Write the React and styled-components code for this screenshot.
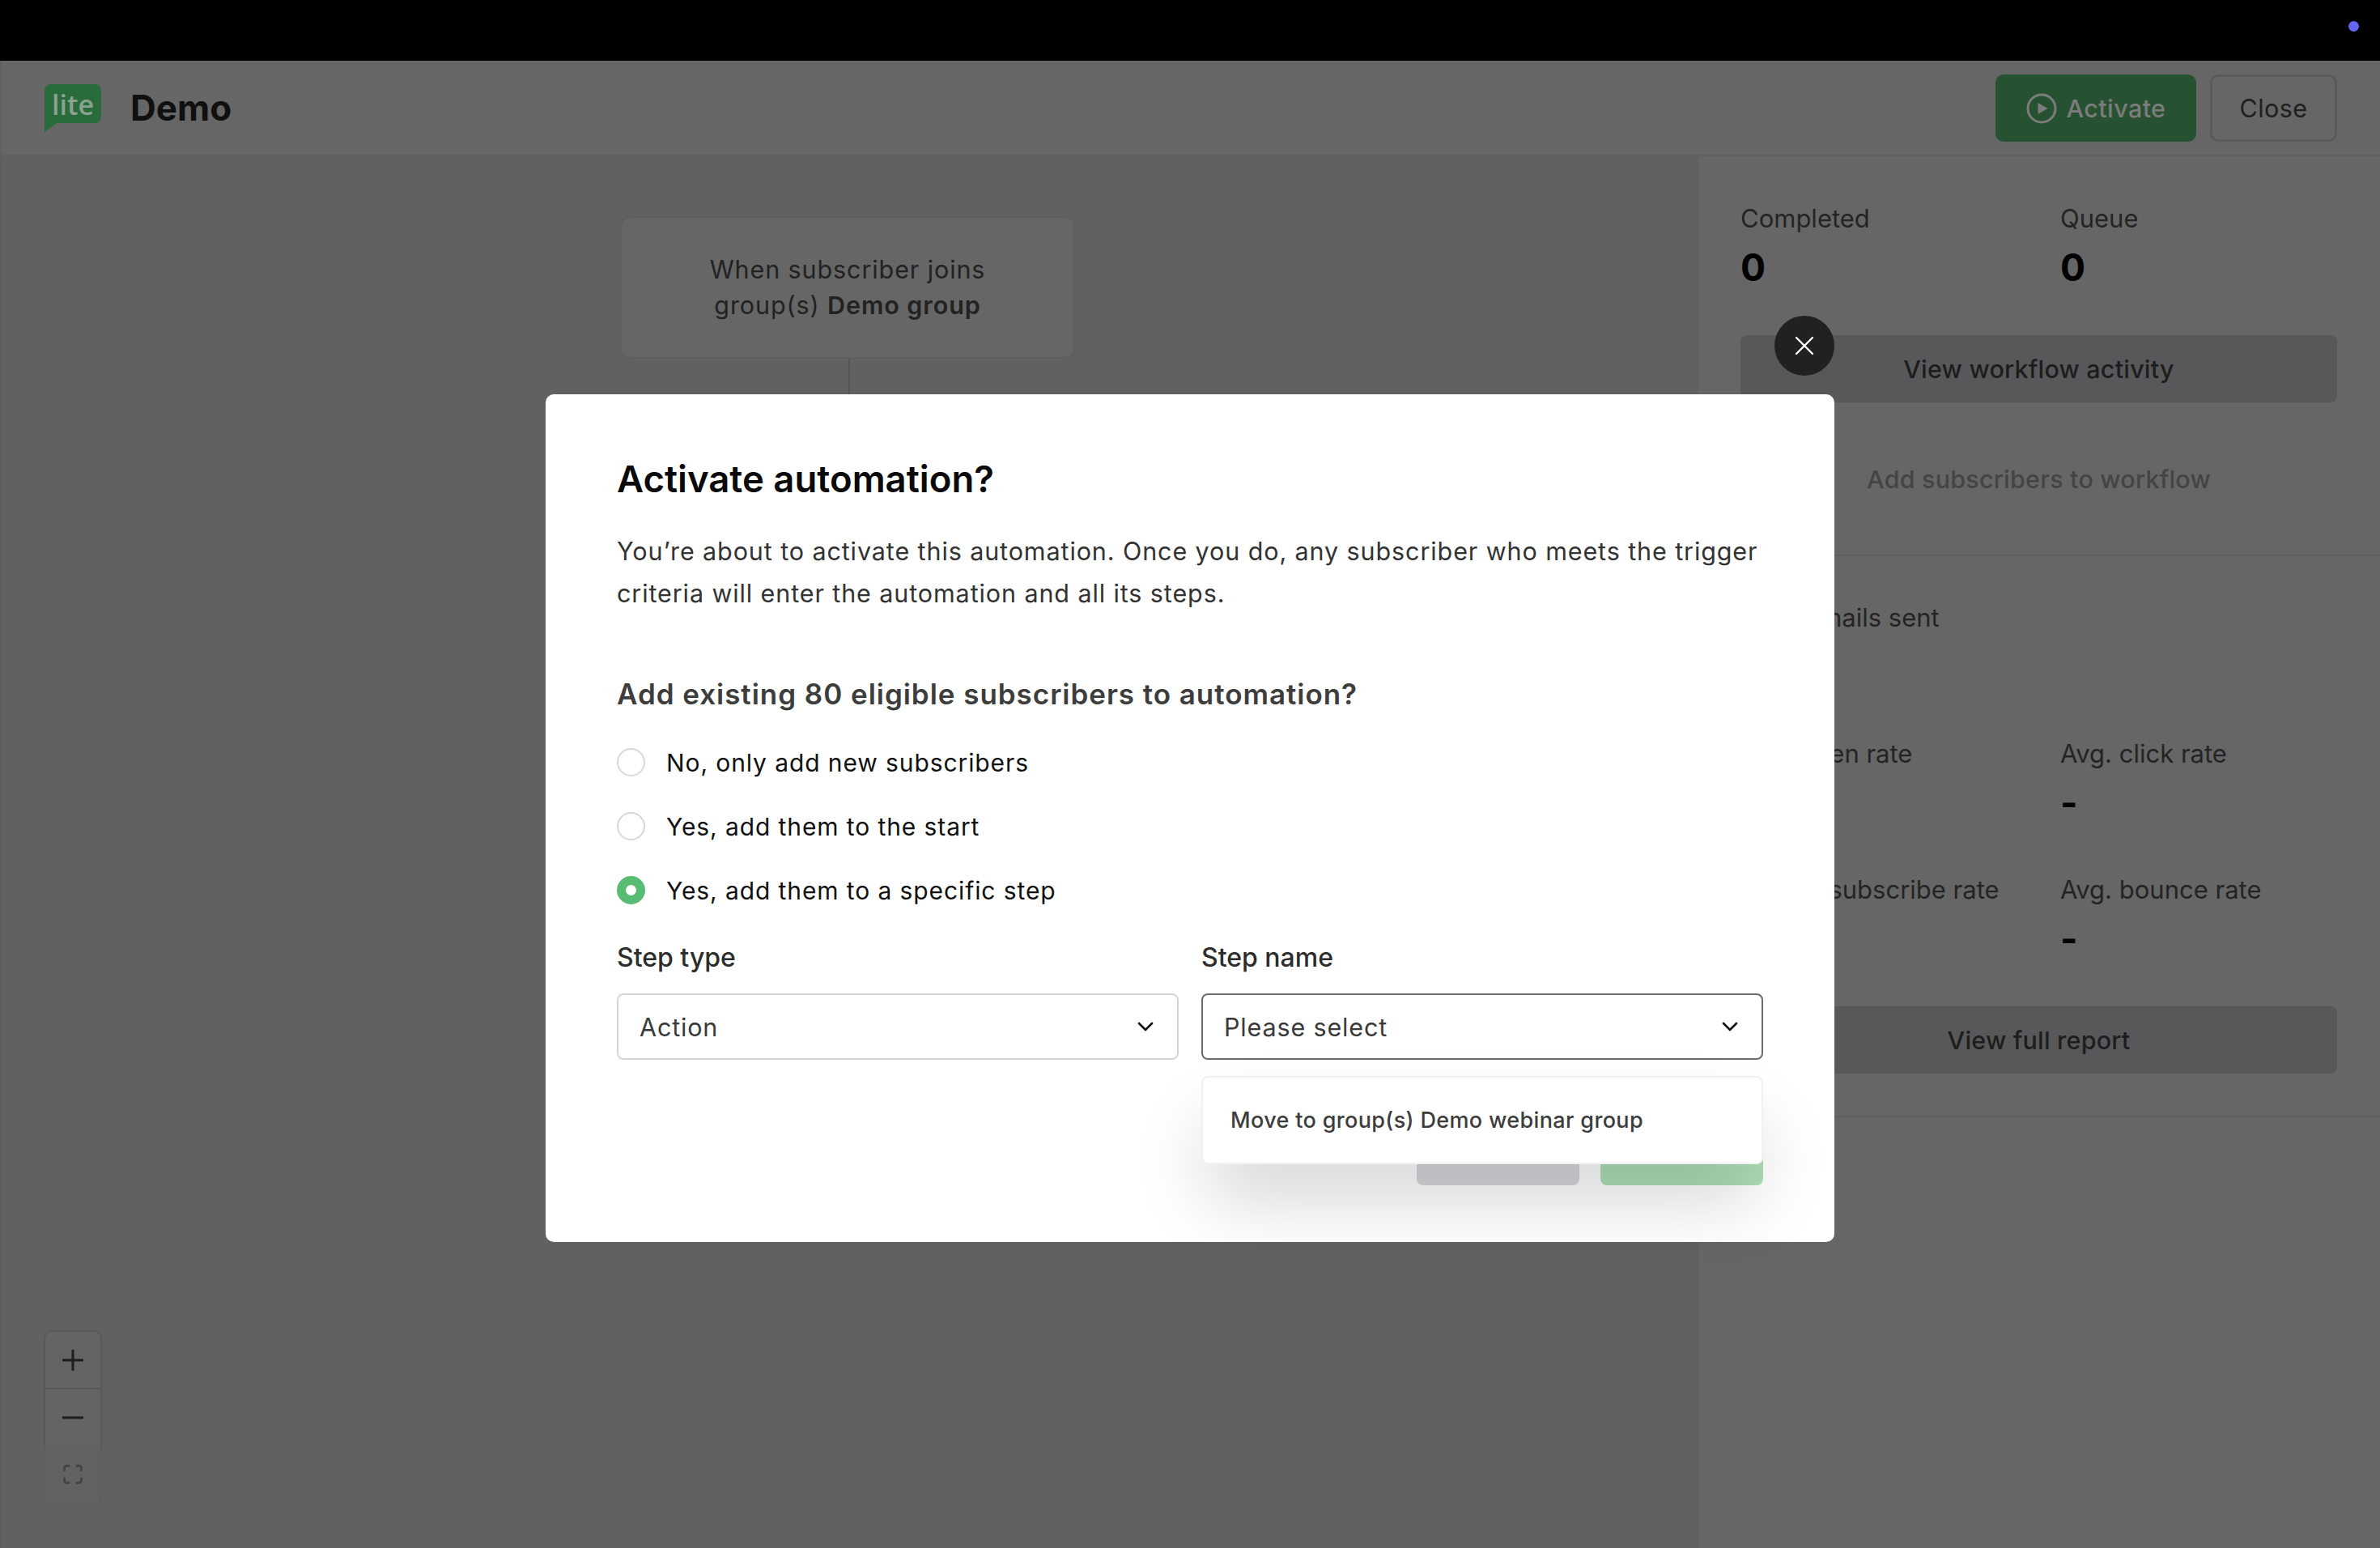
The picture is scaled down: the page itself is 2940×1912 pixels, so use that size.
import React from 'react'
import styled, { createGlobalStyle } from 'styled-components'

const GlobalStyle = createGlobalStyle`
    html, body {
        margin: 0;
        padding: 0;
        background: #616161;
    }
    * {
        box-sizing: border-box;
    }
    body {
        font-family: Inter, "Noto Sans", sans-serif;
    }
`

function Chevron() {
    return (
        <ChevronIcon width="20" height="12" viewBox="0 0 20 12" fill="none">
            <path d="M2 2l8 8 8-8" stroke="#111" strokeWidth="2.6" strokeLinecap="round" strokeLinejoin="round" />
        </ChevronIcon>
    )
}

function Logo() {
    return (
        <LogoMark>
            <svg width="70" height="59" viewBox="0 0 70 59">
                <path d="M8 0h54a8 8 0 0 1 8 8v32a8 8 0 0 1-8 8H15L0 59V8a8 8 0 0 1 8-8z" fill="#2a6b3c" />
            </svg>
            <LogoText>lite</LogoText>
        </LogoMark>
    )
}

function Radio({ label, checked }) {
    return (
        <RadioRow>
            <RadioMark checked={checked} />
            <span>{label}</span>
        </RadioRow>
    )
}

function Stat({ label, value }) {
    return (
        <StatCell>
            <StatLabel>{label}</StatLabel>
            <StatValue>{value}</StatValue>
        </StatCell>
    )
}

export default function App() {
    return (
        <Page>
            <GlobalStyle />
            <TopBar>
                <StatusDot />
            </TopBar>
            <Header>
                <Brand>
                    <Logo />
                    <Title>Demo</Title>
                </Brand>
                <HeaderActions>
                    <ActivateButton>
                        <svg width="38" height="38" viewBox="0 0 38 38" fill="none">
                            <circle cx="19" cy="19" r="17" stroke="#7c7c7c" strokeWidth="3" />
                            <path d="M14.5 12l12 7-12 7z" fill="#7c7c7c" />
                        </svg>
                        Activate
                    </ActivateButton>
                    <CloseButton>Close</CloseButton>
                </HeaderActions>
            </Header>
            <Body>
                <Canvas>
                    <TriggerCard>
                        <div>
                            When subscriber joins<br />
                            group(s) <strong>Demo group</strong>
                        </div>
                    </TriggerCard>
                    <Connector />
                    <ZoomControls>
                        <ZoomButton>
                            <svg width="28" height="28" viewBox="0 0 28 28" fill="none">
                                <path d="M14 1v26M1 14h26" stroke="#1d1d1d" strokeWidth="3" />
                            </svg>
                        </ZoomButton>
                        <ZoomButton>
                            <svg width="28" height="28" viewBox="0 0 28 28" fill="none">
                                <path d="M1 14h26" stroke="#1d1d1d" strokeWidth="3" />
                            </svg>
                        </ZoomButton>
                        <ZoomButton disabled>
                            <svg width="24" height="24" viewBox="0 0 24 24" fill="none">
                                <path d="M1.5 7V4.5a3 3 0 0 1 3-3H7M17 1.5h2.500a3 3 0 0 1 3 3V7M22.500 17v2.500a3 3 0 0 1-3 3H17M7 22.500H4.500a3 3 0 0 1-3-3V17" stroke="#454545" strokeWidth="3" strokeLinecap="round" />
                            </svg>
                        </ZoomButton>
                    </ZoomControls>
                </Canvas>
                <Sidebar>
                    <TopSection>
                        <StatGrid>
                            <Stat label="Completed" value="0" />
                            <Stat label="Queue" value="0" />
                        </StatGrid>
                        <SecondaryButton>View workflow activity</SecondaryButton>
                        <GhostButton>Add subscribers to workflow</GhostButton>
                    </TopSection>
                    <ReportSection>
                        <ReportGrid>
                            <Stat label="Total emails sent" value="0" />
                            <span />
                            <Stat label="Avg. open rate" value="-" />
                            <Stat label="Avg. click rate" value="-" />
                            <Stat label="Avg. unsubscribe rate" value="-" />
                            <Stat label="Avg. bounce rate" value="-" />
                        </ReportGrid>
                        <SecondaryButton>View full report</SecondaryButton>
                    </ReportSection>
                </Sidebar>
            </Body>

            <ModalLayer>
                <Modal>
                    <ModalClose>
                        <svg width="26" height="26" viewBox="0 0 26 26" fill="none">
                            <path d="M3 3l20 20M23 3L3 23" stroke="#fff" strokeWidth="2.400" strokeLinecap="round" />
                        </svg>
                    </ModalClose>
                    <ModalTitle>Activate automation?</ModalTitle>
                    <ModalText>
                        You’re about to activate this automation. Once you do, any subscriber who meets the trigger<br />
                        criteria will enter the automation and all its steps.
                    </ModalText>
                    <Question>Add existing 80 eligible subscribers to automation?</Question>
                    <RadioGroup>
                        <Radio label="No, only add new subscribers" />
                        <Radio label="Yes, add them to the start" />
                        <Radio label="Yes, add them to a specific step" checked />
                    </RadioGroup>
                    <FieldRow>
                        <Field>
                            <FieldLabel>Step type</FieldLabel>
                            <Select>
                                Action
                                <Chevron />
                            </Select>
                        </Field>
                        <Field>
                            <FieldLabel>Step name</FieldLabel>
                            <Select focused>
                                Please select
                                <Chevron />
                            </Select>
                            <Dropdown>
                                <DropdownItem>Move to group(s) Demo webinar group</DropdownItem>
                            </Dropdown>
                        </Field>
                    </FieldRow>
                    <ModalFooter>
                        <FooterButton color="#d6d8dc" />
                        <FooterButton color="#aedfb8" />
                    </ModalFooter>
                </Modal>
            </ModalLayer>
        </Page>
    )
}

const Page = styled.div`
    position: relative;
    width: 2940px;
    height: 1912px;
    overflow: hidden;
    display: flex;
    flex-direction: column;
    background: #616161;
`

const TopBar = styled.div`
    height: 75px;
    flex-shrink: 0;
    background: #000;
    display: flex;
    justify-content: flex-end;
    align-items: flex-start;
    padding: 26px 26px 0 0;
`

const StatusDot = styled.div`
    width: 13px;
    height: 13px;
    border-radius: 50%;
    background: #6366f1;
`

const Header = styled.header`
    height: 118px;
    flex-shrink: 0;
    background: #666;
    border-left: 2px solid #606060;
    border-bottom: 2px solid #5f5f5f;
    display: flex;
    justify-content: space-between;
    align-items: center;
    padding: 0 53px 0 53px;
`

const Brand = styled.div`
    display: flex;
    align-items: center;
    gap: 36px;
`

const LogoMark = styled.div`
    position: relative;
    width: 70px;
    height: 59px;

    svg {
        display: block;
    }
`

const LogoText = styled.span`
    position: absolute;
    left: 0;
    right: 0;
    top: 2px;
    text-align: center;
    font-family: "Open Sans", sans-serif;
    font-size: 34px;
    font-weight: 600;
    line-height: 46px;
    color: #8aa290;
`

const Title = styled.h1`
    margin: 0;
    font-size: 44px;
    font-weight: 700;
    color: #101010;
`

const HeaderActions = styled.div`
    display: flex;
    gap: 17px;
    margin-top: 1px;
`

const ActivateButton = styled.div`
    width: 248px;
    height: 83px;
    border-radius: 10px;
    background: #275231;
    color: #7c7c7c;
    font-size: 30.5px;
    letter-spacing: 0.4px;
    font-weight: 500;
    display: flex;
    justify-content: center;
    align-items: center;
    gap: 12px;
`

const CloseButton = styled.div`
    width: 157px;
    height: 83px;
    border-radius: 10px;
    border: 3px solid #5a5a5a;
    color: #1f1f1f;
    font-size: 30.5px;
    letter-spacing: 0.4px;
    display: flex;
    justify-content: center;
    align-items: center;
`

const Body = styled.div`
    flex: 1;
    display: flex;
    min-height: 0;
`

const Canvas = styled.main`
    position: relative;
    flex: 1;
    display: flex;
    flex-direction: column;
    align-items: center;
    padding-top: 74px;
    border-left: 2px solid #5e5e5e;
`

const TriggerCard = styled.div`
    width: 562px;
    height: 176px;
    margin-right: 4px;
    border-radius: 12px;
    border: 2px solid #5f5f5f;
    background: #666;
    color: #222;
    font-size: 30.5px;
    line-height: 44px;
    letter-spacing: 0.9px;
    text-align: center;
    display: flex;
    justify-content: center;
    align-items: center;

    strong {
        font-weight: 600;
    }
`

const Connector = styled.div`
    width: 2px;
    height: 120px;
    background: #555;
`

const ZoomControls = styled.div`
    position: absolute;
    left: 52px;
    bottom: 54px;
    width: 72px;
    display: flex;
    flex-direction: column;
`

const ZoomButton = styled.div`
    height: 73px;
    display: flex;
    justify-content: center;
    align-items: center;
    background: ${props => (props.disabled ? '#626262' : '#646464')};
    border: 2px solid ${props => (props.disabled ? '#5f5f5f' : '#595959')};
    margin-top: -2px;

    &:first-child {
        border-radius: 10px 10px 0 0;
    }
    &:last-child {
        border-top: none;
        border-radius: 0 0 10px 10px;
    }
`

const Sidebar = styled.aside`
    width: 844px;
    flex-shrink: 0;
    background: #666;
    border-left: 2px solid #5f5f5f;
`

const TopSection = styled.section`
    height: 494px;
    padding: 57px 53px 0 52px;
    border-bottom: 2px solid #5f5f5f;
`

const ReportSection = styled.section`
    height: 693px;
    padding: 56px 53px 0 52px;
    border-bottom: 2px solid #5f5f5f;
`

const StatGrid = styled.div`
    display: grid;
    grid-template-columns: 395px 1fr;
    margin-bottom: 49px;
`

const ReportGrid = styled(StatGrid)`
    row-gap: 53px;
`

const StatCell = styled.div`
    display: flex;
    flex-direction: column;
`

const StatLabel = styled.div`
    font-size: 31px;
    line-height: 40px;
    color: #242424;
`

const StatValue = styled.div`
    margin-top: 5px;
    font-size: 46px;
    line-height: 70px;
    font-weight: 700;
    color: #000;
`

const SecondaryButton = styled.div`
    height: 83px;
    border-radius: 8px;
    background: #58585a;
    color: #1d1d1d;
    font-size: 30.5px;
    letter-spacing: 0.2px;
    font-weight: 500;
    display: flex;
    justify-content: center;
    align-items: center;
`

const GhostButton = styled(SecondaryButton)`
    margin-top: 53px;
    background: transparent;
    color: #444;
`

const ModalLayer = styled.div`
    position: absolute;
    top: 75px;
    left: 0;
    right: 0;
    bottom: 0;
    display: flex;
    justify-content: center;
    align-items: flex-start;
    padding-top: 412px;
`

const Modal = styled.div`
    position: relative;
    width: 1592px;
    height: 1047px;
    border-radius: 10px;
    background: #fff;
    padding: 75px 88px 70px;
`

const ModalClose = styled.div`
    position: absolute;
    top: -97px;
    right: 0;
    width: 74px;
    height: 74px;
    border-radius: 50%;
    background: #212121;
    display: flex;
    justify-content: center;
    align-items: center;
`

const ModalTitle = styled.h2`
    margin: 0;
    font-size: 45.5px;
    line-height: 60px;
    font-weight: 600;
    color: #0a0a0a;
`

const ModalText = styled.p`
    margin: 33px 0 0;
    font-size: 30.5px;
    line-height: 52px;
    letter-spacing: 0.9px;
    white-space: nowrap;
    color: #333;
`

const Question = styled.h3`
    margin: 76px 0 0;
    font-size: 35px;
    line-height: 44px;
    font-weight: 600;
    letter-spacing: 0.96px;
    color: #3d3d3d;
`

const RadioGroup = styled.div`
    margin-top: 23px;
    display: flex;
    flex-direction: column;
`

const RadioRow = styled.div`
    height: 79px;
    display: flex;
    align-items: center;
    gap: 26px;
    font-size: 30px;
    letter-spacing: 0.9px;
    color: #111;
`

const RadioMark = styled.div`
    width: 35px;
    height: 35px;
    border-radius: 50%;
    background: #fff;
    border: ${props => (props.checked ? '11px solid #58bd72' : '2px solid #d6d8db')};
`

const FieldRow = styled.div`
    margin-top: 24px;
    display: grid;
    grid-template-columns: 694px 694px;
    gap: 28px;
`

const Field = styled.div`
    position: relative;
`

const FieldLabel = styled.div`
    height: 40px;
    margin-bottom: 24px;
    font-size: 32px;
    line-height: 40px;
    font-weight: 500;
    color: #2c2c2c;
`

const Select = styled.div`
    height: 82px;
    border-radius: 8px;
    border: 2px solid ${props => (props.focused ? '#6b6b6b' : '#d3d5d8')};
    padding: 0 29px 0 26px;
    font-size: 30.5px;
    letter-spacing: 0.85px;
    color: #3a3a3a;
    display: flex;
    justify-content: space-between;
    align-items: center;
`

const ChevronIcon = styled.svg`
    flex-shrink: 0;
`

const Dropdown = styled.div`
    position: absolute;
    z-index: 2;
    top: calc(100% + 20px);
    left: 0;
    right: 0;
    height: 109px;
    border-radius: 8px;
    border: 2px solid #f1f1f2;
    background: #fff;
    padding: 0 34px;
    display: flex;
    align-items: center;
    box-shadow: 0 50px 90px -10px rgba(0, 0, 0, 0.18);
`

const DropdownItem = styled.div`
    font-size: 27px;
    font-weight: 550;
    letter-spacing: 0.35px;
    color: #3d3d3d;
`

const ModalFooter = styled.div`
    margin-top: 73px;
    display: flex;
    justify-content: flex-end;
    gap: 26px;
`

const FooterButton = styled.div`
    width: 201px;
    height: 82px;
    border-radius: 8px;
    background: ${props => props.color};
`
